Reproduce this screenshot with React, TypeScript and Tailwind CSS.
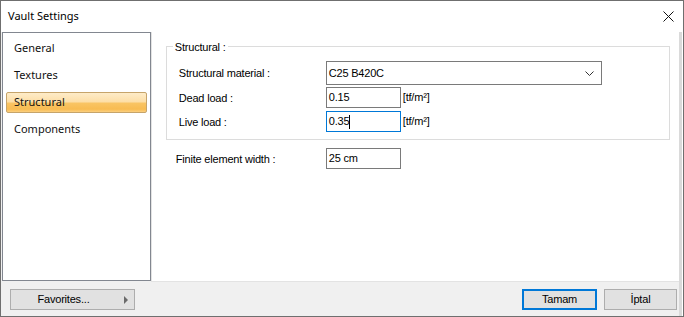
import React from "react";

const sans = "font-['Liberation_Sans',Arial,sans-serif] text-[11px] tracking-[-0.2px] text-black";
const ui = "font-['Noto_Sans','Open_Sans',sans-serif] text-[11px] text-[#111]";

function Field({ value, focused, cursor }: { value: string; focused?: boolean; cursor?: boolean }) {
  return (
    <div
      className={`w-[75px] h-[21px] bg-white flex items-center pl-[2px] ${sans} ${
        focused ? "border border-[#0078d7]" : "border border-[#7a7a7a]"
      }`}
    >
      <span>{value}</span>
      {cursor && <span className="w-[1px] h-[14px] bg-black ml-[0px]" />}
    </div>
  );
}

export default function App() {
  const items = ["General", "Textures", "Structural", "Components"];
  return (
    <div className="w-[684px] h-[317px] border border-[#6f6f6f] bg-white flex flex-col overflow-hidden">
      {/* Title bar */}
      <div className="h-[31px] shrink-0 flex items-center justify-between pl-[7px] pr-[9px] bg-white">
        <span className={`${ui} text-black text-[11.5px]`}>Vault Settings</span>
        <svg width="11" height="11" viewBox="0 0 11 11">
          <path d="M0.5 0.5 L10.5 10.5 M10.5 0.5 L0.5 10.5" stroke="#111" strokeWidth="1" fill="none" />
        </svg>
      </div>

      {/* Body */}
      <div className="flex-1 flex bg-[#f0f0f0]">
        <div className="w-[678px] flex flex-col">
          <div className="flex h-[250px]">
            {/* Left nav */}
            <div className="ml-[1px] w-[149px] h-[249px] border border-[#828790] bg-white pt-[5px] px-[3px] flex flex-col gap-[6px]">
              {items.map((it) =>
                it === "Structural" ? (
                  <div
                    key={it}
                    className="h-[21px] flex items-center pl-[7px] border border-[#c6a46a] rounded-[2px] bg-[linear-gradient(to_bottom,#feecc8_0%,#fddfa8_45%,#f9c463_55%,#f8bc52_85%,#fbcf80_100%)]"
                  >
                    <span className={`${ui} text-[#5e4b34]`}>{it}</span>
                  </div>
                ) : (
                  <div key={it} className="h-[21px] flex items-center pl-[8px]">
                    <span className={ui}>{it}</span>
                  </div>
                )
              )}
            </div>

            {/* Right content */}
            <div className="w-[529px] h-[250px] bg-white border-l border-b border-[#e3e3e3] pl-[14px] pt-[14px]">
              <div className="relative w-[504px] h-[94px] border border-[#dcdcdc] pl-[12px] pt-[14px]">
                <span className={`absolute left-[6px] top-[-8px] px-[2px] bg-white leading-[16px] ${sans}`}>Structural :</span>

                <div className="flex items-center h-[24px]">
                  <span className={`w-[147px] ${sans}`}>Structural material :</span>
                  <div className={`w-[276px] h-[24px] border border-[#7a7a7a] bg-white flex items-center justify-between pl-[2px] pr-[7px] ${sans}`}>
                    <span>C25 B420C</span>
                    <svg width="9" height="5" viewBox="0 0 9 5">
                      <path d="M0.5 0.5 L4.5 4.5 L8.5 0.5" stroke="#333" strokeWidth="1" fill="none" />
                    </svg>
                  </div>
                </div>

                <div className="flex items-center h-[21px] mt-[2px]">
                  <span className={`w-[147px] pt-[2px] ${sans}`}>Dead load :</span>
                  <Field value="0.15" />
                  <span className={`ml-[2px] ${sans}`}>[tf/m²]</span>
                </div>

                <div className="flex items-center h-[21px] mt-[3px]">
                  <span className={`w-[147px] pt-[2px] ${sans}`}>Live load :</span>
                  <Field value="0.35" focused cursor />
                  <span className={`ml-[2px] ${sans}`}>[tf/m²]</span>
                </div>
              </div>

              <div className="flex items-center h-[21px] mt-[8px] ml-[10px]">
                <span className={`w-[150px] pt-[2px] ${sans}`}>Finite element width :</span>
                <Field value="25 cm" />
              </div>
            </div>
          </div>

          {/* Bottom buttons */}
          <div className="flex items-start pt-[7px] pl-[9px] pr-[2px]">
            <button className={`w-[125px] h-[21px] flex items-center bg-[#e1e1e1] border border-[#adadad] pr-[6px] ${sans}`}>
              <span className="w-[105px] text-center">Favorites...</span>
              <span className="ml-[8px] w-0 h-0 border-y-[4px] border-y-transparent border-l-[4px] border-l-[#6a6a6a]" />
            </button>
            <div className="flex-1" />
            <button className={`w-[75px] h-[21px] flex items-center justify-center bg-[#e1e1e1] border-2 border-[#0078d7] ${sans}`}>
              Tamam
            </button>
            <button className={`ml-[7px] w-[73px] h-[21px] flex items-center justify-center bg-[#e1e1e1] border border-[#adadad] ${sans}`}>
              İptal
            </button>
          </div>
        </div>
        <div className="w-[3px] bg-[#dadada]" />
        <div className="w-[1px] bg-white" />
      </div>
    </div>
  );
}
